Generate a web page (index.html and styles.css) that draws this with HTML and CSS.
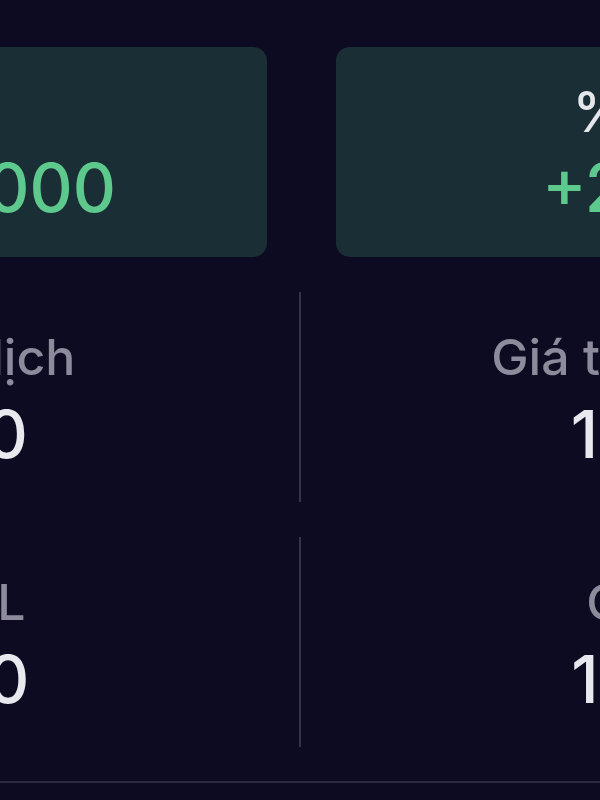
FILE: index.html
```html
<!DOCTYPE html>
<html>

<head>
    <title>Thống kê</title>
    <meta name="viewport" content="width=device-width, initial-scale=1">
    <link rel="stylesheet" href="styles.css">
</head>

<body>
    <div class="stage">
        <div class="cards">
            <div class="card">
                <span class="cardLabel">Lãi/Lỗ</span>
                <span class="cardValue">+12.500.000</span>
            </div>
            <div class="card">
                <span class="cardLabel">% Lãi/Lỗ</span>
                <span class="cardValue">+25,00%</span>
            </div>
        </div>
        <div class="stats">
            <div class="stat left">
                <span class="statLabel">Số giao dịch</span>
                <span class="statValue">11.250</span>
            </div>
            <div class="stat right">
                <span class="statLabel">Giá trị giao dịch</span>
                <span class="statValue">12.500</span>
            </div>
            <div class="stat left">
                <span class="statLabel">Tổng SL</span>
                <span class="statValue">11.450</span>
            </div>
            <div class="stat right">
                <span class="statLabel">Chốt lời</span>
                <span class="statValue">15.000</span>
            </div>
        </div>
        <div class="rule"></div>
    </div>
</body>

</html>
```

FILE: styles.css
```css
* {
    box-sizing: border-box
}

html,
body {
    margin: 0;
    height: 100%;
}

body {
    background: #0c0b21;
    font-family: Inter, "Noto Sans", sans-serif;
    font-weight: 500;
    overflow: hidden;
}

.stage {
    width: 1486px;
    margin-left: -442px;
    padding-top: 47px;
}

.cards {
    display: grid;
    grid-template-columns: 1fr 1fr;
    gap: 69px;
}

.card {
    background: #1a2e36;
    border-radius: 14px;
    height: 210px;
    padding-top: 37px;
    display: flex;
    flex-direction: column;
    align-items: center;
    gap: 14px;
}

.cardLabel {
    font-size: 56px;
    line-height: 1;
    color: #e3e6ea;
    white-space: nowrap;
}

.cardValue {
    font-size: 67px;
    line-height: 1;
    color: #5ec98c;
    white-space: nowrap;
}

.stats {
    display: grid;
    grid-template-columns: 1fr 1fr;
    row-gap: 35px;
    margin-top: 35px;
}

.stat {
    height: 210px;
    padding-top: 40px;
    display: flex;
    flex-direction: column;
    align-items: center;
    gap: 19px;
}

.stat.left {
    border-right: 2px solid #34334a;
}

.stat.right {
    padding-left: 10px;
}

.statLabel {
    font-size: 50px;
    line-height: 1;
    color: #8c8a9b;
    white-space: nowrap;
}

.statValue {
    font-size: 66px;
    line-height: 1;
    color: #e8e8ef;
    white-space: nowrap;
}

.rule {
    height: 2px;
    background: #2a2940;
    margin-top: 34px;
}
```
